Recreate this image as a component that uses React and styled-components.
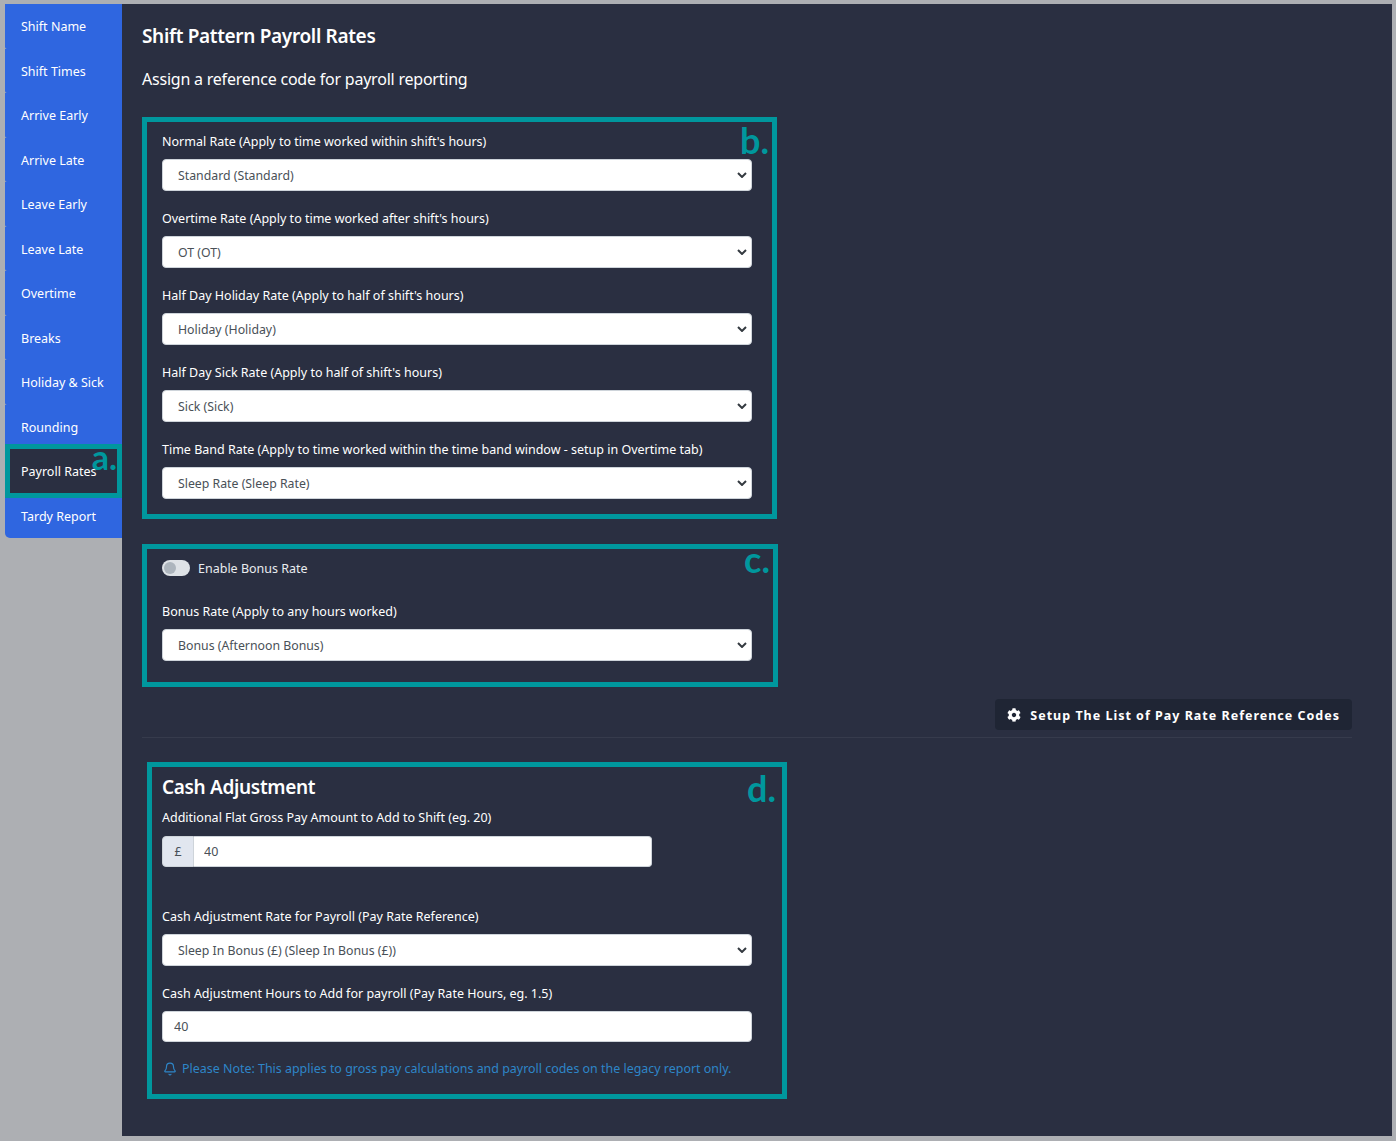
import React from 'react'
import styled, { createGlobalStyle } from 'styled-components'
import { FaCog } from 'react-icons/fa'
import { Bell } from 'lucide-react'

const TEAL = '#00979d'
const DARK = '#2a2f41'
const FONT = '"Noto Sans", "Open Sans", Arial, sans-serif'
const CHEVRON = `url("data:image/svg+xml,%3Csvg xmlns='http://www.w3.org/2000/svg' width='10' height='6' viewBox='0 0 10 6'%3E%3Cpath d='M1 1l4 4 4-4' fill='none' stroke='%23343a40' stroke-width='2'/%3E%3C/svg%3E")`

const navItems = [
    'Shift Name', 'Shift Times', 'Arrive Early', 'Arrive Late', 'Leave Early', 'Leave Late',
    'Overtime', 'Breaks', 'Holiday & Sick', 'Rounding', 'Payroll Rates', 'Tardy Report',
]

const rates = [
    { label: "Normal Rate (Apply to time worked within shift's hours)", value: 'Standard (Standard)' },
    { label: "Overtime Rate (Apply to time worked after shift's hours)", value: 'OT (OT)' },
    { label: "Half Day Holiday Rate (Apply to half of shift's hours)", value: 'Holiday (Holiday)' },
    { label: "Half Day Sick Rate (Apply to half of shift's hours)", value: 'Sick (Sick)' },
    { label: 'Time Band Rate (Apply to time worked within the time band window - setup in Overtime tab)', value: 'Sleep Rate (Sleep Rate)' },
]

function RateField({ label, value }) {
    return (
        <Field>
            <Label>{label}</Label>
            <Select defaultValue={value}>
                <option>{value}</option>
            </Select>
        </Field>
    )
}

function App() {
    return (
        <Page>
            <GlobalStyle />
            <Sidebar>
                {navItems.map(item => (
                    <NavItem key={item} $active={item === 'Payroll Rates'}>
                        {item}
                        {item === 'Payroll Rates' && <NavMarker>a.</NavMarker>}
                    </NavItem>
                ))}
            </Sidebar>
            <Main>
                <Title>Shift Pattern Payroll Rates</Title>
                <Subtitle>Assign a reference code for payroll reporting</Subtitle>

                <RatesSection>
                    <Marker $top={-2} $right={3}>b.</Marker>
                    {rates.map(rate => <RateField key={rate.label} {...rate} />)}
                </RatesSection>

                <BonusSection>
                    <Marker $top={-10} $right={3}>c.</Marker>
                    <ToggleRow>
                        <Toggle />
                        <ToggleLabel>Enable Bonus Rate</ToggleLabel>
                    </ToggleRow>
                    <RateField label="Bonus Rate (Apply to any hours worked)" value="Bonus (Afternoon Bonus)" />
                </BonusSection>

                <ButtonRow>
                    <SetupButton>
                        <FaCog size={14} />
                        Setup The List of Pay Rate Reference Codes
                    </SetupButton>
                </ButtonRow>
                <Divider />

                <CashSection>
                    <Marker $top={1} $right={6}>d.</Marker>
                    <CashTitle>Cash Adjustment</CashTitle>
                    <Label>Additional Flat Gross Pay Amount to Add to Shift (eg. 20)</Label>
                    <InputGroup>
                        <Prefix>£</Prefix>
                        <GroupInput defaultValue="40" />
                    </InputGroup>
                    <RateField label="Cash Adjustment Rate for Payroll (Pay Rate Reference)" value="Sleep In Bonus (£) (Sleep In Bonus (£))" />
                    <Label>Cash Adjustment Hours to Add for payroll (Pay Rate Hours, eg. 1.5)</Label>
                    <TextInput defaultValue="40" />
                    <Note>
                        <Bell size={14} />
                        Please Note: This applies to gross pay calculations and payroll codes on the legacy report only.
                    </Note>
                </CashSection>
            </Main>
        </Page>
    )
}

export default App


const GlobalStyle = createGlobalStyle`
    * {
        box-sizing: border-box;
    }

    body {
        margin: 0;
        background: #adafb3;
        font-family: ${FONT};
    }
`;

const Page = styled.div`
    display: flex;
    align-items: flex-start;
    width: 1396px;
    height: 1141px;
    padding: 4px 4px 5px 5px;
`;

const Sidebar = styled.nav`
    width: 117px;
    flex-shrink: 0;
    display: flex;
    flex-direction: column;
`;

const NavItem = styled.a`
    position: relative;
    height: 44.5px;
    display: flex;
    align-items: center;
    padding: 1px 0 0 16px;
    font-size: 12.5px;
    color: #fff;
    background: ${p => (p.$active ? DARK : '#2f66e0')};
    border-radius: 0 0 0 2px;

    &:last-child {
        border-radius: 0 0 0 5px;
    }

    ${p => p.$active && `
        &::after {
            content: '';
            position: absolute;
            inset: -5px 0 -4px 0;
            border: 5px solid ${TEAL};
            z-index: 1;
        }
    `}
`;

const NavMarker = styled.span`
    position: absolute;
    top: -10px;
    right: 5px;
    z-index: 2;
    font-family: Lato, sans-serif;
    font-size: 34px;
    font-weight: 700;
    line-height: 36px;
    color: ${TEAL};
`;

const Main = styled.main`
    flex: 1;
    height: 100%;
    padding: 20px 40px 0 20px;
    background: ${DARK};
    color: #fff;
`;

const Title = styled.h1`
    margin: 0;
    height: 24px;
    font-size: 19px;
    line-height: 24px;
    font-weight: 600;
    letter-spacing: -0.33px;
`;

const Subtitle = styled.p`
    margin: 19px 0 0;
    height: 24px;
    font-size: 16px;
    line-height: 24px;
    letter-spacing: -0.22px;
`;

const Section = styled.section`
    position: relative;
    border: 5px solid ${TEAL};
`;

const RatesSection = styled(Section)`
    width: 635px;
    margin-top: 26px;
    padding: 9px 20px 15px 15px;
    height: 402px;
`;

const BonusSection = styled(Section)`
    width: 636px;
    height: 143px;
    margin-top: 25px;
    padding: 9px 21px 0 15px;
`;

const CashSection = styled(Section)`
    width: 640px;
    height: 337px;
    margin: 24px 0 0 5px;
    padding: 7px 30px 0 10px;
`;

const Marker = styled.span`
    position: absolute;
    top: ${p => p.$top}px;
    right: ${p => p.$right}px;
    font-family: Lato, sans-serif;
    font-size: 36px;
    font-weight: 700;
    line-height: 40px;
    color: ${TEAL};
`;

const Field = styled.div`
    margin-bottom: 17px;
`;

const Label = styled.label`
    display: block;
    height: 20px;
    margin-bottom: 8px;
    font-size: 12.5px;
    line-height: 22px;
    white-space: nowrap;
`;

const Select = styled.select`
    display: block;
    width: 590px;
    height: 32px;
    padding: 0 24px 0 15px;
    appearance: none;
    border: 1px solid #ced4da;
    border-radius: 4px;
    background: #fff ${CHEVRON} no-repeat right 4px center;
    color: #495057;
    font-family: ${FONT};
    font-size: 12.3px;
`;

const ToggleRow = styled.div`
    display: flex;
    align-items: center;
    height: 20px;
    margin-bottom: 23px;
`;

const Toggle = styled.span`
    position: relative;
    width: 28px;
    height: 16px;
    border-radius: 8px;
    background: #dee2e6;

    &::before {
        content: '';
        position: absolute;
        top: 2px;
        left: 2px;
        width: 12px;
        height: 12px;
        border-radius: 50%;
        background: #adb5bd;
    }
`;

const ToggleLabel = styled.span`
    margin-left: 8px;
    font-size: 12.5px;
    color: #e9ecef;
`;

const ButtonRow = styled.div`
    display: flex;
    justify-content: flex-end;
    margin-top: 12px;
`;

const SetupButton = styled.button`
    display: flex;
    align-items: center;
    gap: 9px;
    height: 31px;
    padding: 1px 12px 0 12px;
    border: none;
    border-radius: 4px;
    background: #1f2534;
    color: #fff;
    font-family: ${FONT};
    font-size: 12.5px;
    font-weight: 700;
    letter-spacing: 1px;
`;

const Divider = styled.hr`
    height: 1px;
    margin: 7px 0 0;
    border: none;
    background: rgba(255, 255, 255, 0.06);
`;

const CashTitle = styled.h2`
    margin: 0 0 7px;
    height: 26px;
    font-size: 19px;
    line-height: 26px;
    font-weight: 600;
    letter-spacing: -0.33px;
`;

const InputGroup = styled.div`
    display: flex;
    width: 490px;
    height: 31px;
    margin: 9px 0 39px;
`;

const Prefix = styled.span`
    width: 32px;
    display: flex;
    align-items: center;
    justify-content: center;
    border: 1px solid #ced4da;
    border-radius: 4px 0 0 4px;
    background: #e1e6ef;
    color: #495057;
    font-size: 12.5px;
`;

const GroupInput = styled.input`
    flex: 1;
    min-width: 0;
    padding: 0 10px;
    border: 1px solid #ced4da;
    border-left: none;
    border-radius: 0 4px 4px 0;
    color: #495057;
    font-family: ${FONT};
    font-size: 12.5px;
`;

const TextInput = styled.input`
    display: block;
    width: 590px;
    height: 31px;
    padding: 0 11px;
    border: 1px solid #ced4da;
    border-radius: 4px;
    color: #495057;
    font-family: ${FONT};
    font-size: 12.5px;
`;

const Note = styled.p`
    display: flex;
    align-items: center;
    gap: 5px;
    margin: 17px 0 0 1px;
    font-size: 12.45px;
    line-height: 20px;
    color: #2e86c8;
    white-space: nowrap;

    svg {
        flex-shrink: 0;
    }
`;
